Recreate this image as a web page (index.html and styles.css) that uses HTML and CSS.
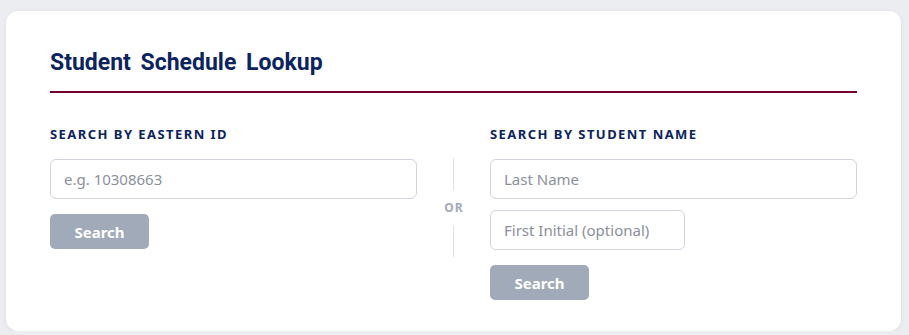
FILE: index.html
```html
<!DOCTYPE html>
<html lang="en">
<head>
  <meta charset="UTF-8">
  <meta name="viewport" content="width=device-width, initial-scale=1">
  <title>Student Schedule Lookup</title>
  <link rel="stylesheet" href="styles.css">
</head>
<body>
  <!-- Tarjeta de búsqueda -->
  <div class="card">
    <h1 class="card-title">Student Schedule Lookup</h1>

    <div class="lookup">
      <!-- Búsqueda por ID -->
      <div class="lookup-col">
        <label class="field-label" for="eid">Search by Eastern ID</label>
        <input class="field" id="eid" type="text" placeholder="e.g. 10308663">
        <button class="btn" type="button">Search</button>
      </div>

      <!-- Separador -->
      <div class="divider">
        <span class="divider-line top"></span>
        <span class="divider-text">OR</span>
        <span class="divider-line"></span>
      </div>

      <!-- Búsqueda por nombre -->
      <div class="lookup-col">
        <label class="field-label" for="lname">Search by Student Name</label>
        <input class="field" id="lname" type="text" placeholder="Last Name">
        <input class="field field-small" type="text" placeholder="First Initial (optional)">
        <button class="btn" type="button">Search</button>
      </div>
    </div>
  </div>
</body>
</html>
```

FILE: styles.css
```css
* {
  box-sizing: border-box;
  margin: 0;
  padding: 0;
}

body {
  background-color: #ecedf1;
  font-family: 'Noto Sans', 'Open Sans', sans-serif;
  padding: 11px 8px 0 6px;
}

/* Tarjeta */
.card {
  background-color: #fff;
  border-radius: 12px;
  box-shadow: 0 1px 4px rgba(20, 30, 60, 0.08);
  padding: 39px 44px 31px;
}

.card-title {
  font-family: Roboto, 'Noto Sans', sans-serif;
  font-size: 23px;
  font-weight: 700;
  line-height: 26px;
  word-spacing: 4px;
  color: #0b2461;
  padding-bottom: 15px;
  border-bottom: 2px solid #76002f;
}

/* Columnas */
.lookup {
  display: grid;
  grid-template-columns: 1fr 73px 1fr;
  margin-top: 32px;
}

.lookup-col {
  display: flex;
  flex-direction: column;
  align-items: flex-start;
}

.field-label {
  font-size: 13px;
  font-weight: 700;
  line-height: 18px;
  letter-spacing: 1.45px;
  text-transform: uppercase;
  color: #0b2461;
  margin-bottom: 16px;
}

.field {
  width: 100%;
  height: 40px;
  border: 1px solid #cfd4e0;
  border-radius: 6px;
  padding: 0 13px;
  font-family: inherit;
  font-size: 15px;
  color: #333;
  background: #fff;
}

.field::placeholder {
  color: #8b909a;
}

.field-small {
  width: 195px;
  margin-top: 11px;
}

.btn {
  margin-top: 15px;
  width: 99px;
  height: 35px;
  border: none;
  border-radius: 5px;
  background-color: #a1aab8;
  color: #fff;
  font-family: inherit;
  font-size: 15px;
  font-weight: 700;
  cursor: pointer;
}

/* Separador "OR" */
.divider {
  display: flex;
  flex-direction: column;
  align-items: center;
  gap: 9px;
  margin-top: 33px;
  align-self: start;
}

.divider-line {
  width: 1px;
  height: 32px;
  background-color: #dfe2e8;
}

.divider-line.top {
  height: 33px;
}

.divider-text {
  font-size: 12px;
  font-weight: 700;
  line-height: 16px;
  letter-spacing: 1px;
  color: #a1aab8;
  padding-left: 1px;
}
```
